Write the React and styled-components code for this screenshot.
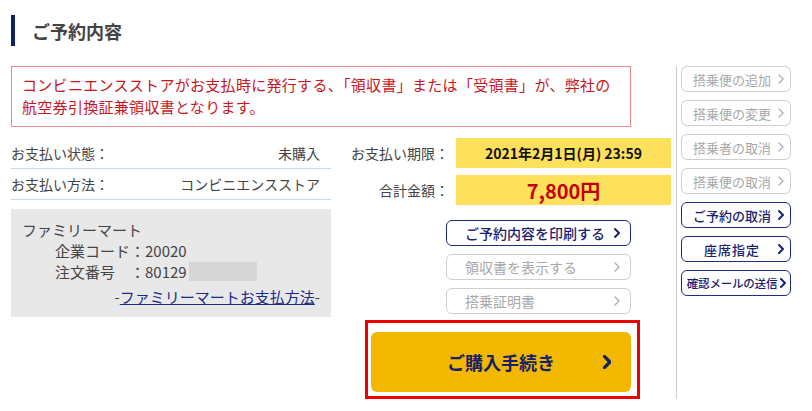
import styled, { createGlobalStyle } from 'styled-components';

const GlobalStyle = createGlobalStyle`
  html, body {
    margin: 0;
    padding: 0;
    background: #fff;
  }
  body {
    font-family: "Noto Sans CJK JP", "Noto Sans", sans-serif;
    color: #444;
  }
`;

const Page = styled.div`
  width: 812px;
  height: 411px;
  padding: 15px 0 0 11px;
  box-sizing: border-box;
  overflow: hidden;
`;

const Heading = styled.h2`
  margin: 0;
  height: 31px;
  display: flex;
  align-items: center;
  border-left: 4px solid #0d1f6e;
  padding-left: 17px;
  font-size: 18px;
  font-weight: 700;
  color: #444;
  line-height: 1;
`;

const Body = styled.div`
  display: flex;
  margin-top: 20px;
`;

const Main = styled.div`
  width: 660px;
`;

const Notice = styled.p`
  margin: 0;
  width: 620px;
  box-sizing: border-box;
  border: 1px solid #e88a8a;
  padding: 7px 10px 8px;
  font-size: 15px;
  line-height: 22px;
  letter-spacing: 0.3px;
  color: #c8161d;
`;

const Columns = styled.div`
  display: flex;
  margin-top: 11px;
`;

const LeftCol = styled.div`
  width: 320px;
`;

const InfoRow = styled.div`
  height: 30px;
  display: flex;
  align-items: center;
  justify-content: space-between;
  padding-right: 11px;
  border-bottom: 1px solid #c6d9ea;
  font-size: 14px;
  color: #444;
`;

const StoreBox = styled.div`
  margin-top: 9px;
  background: #e8e8e8;
  padding: 10px 11px;
  font-size: 15px;
  line-height: 21px;
  color: #444;
`;

const StoreLine = styled.div`
  padding-left: ${p => (p.$indent ? '33px' : '0')};
  display: flex;
  align-items: center;
`;

const Masked = styled.span`
  display: inline-block;
  width: 68px;
  height: 19px;
  margin-left: 2px;
  background: #d6d6d6;
`;

const LinkLine = styled.div`
  margin-top: 4px;
  text-align: right;
`;

const StoreLink = styled.a`
  color: #1a2a8a;
  text-decoration: underline;
`;

const MidCol = styled.div`
  margin-left: 9px;
  width: 331px;
  display: flex;
  flex-direction: column;
`;

const PayGrid = styled.div`
  display: grid;
  grid-template-columns: 109px 215px;
  column-gap: 7px;
  row-gap: 7px;
`;

const PayLabel = styled.div`
  height: 30px;
  display: flex;
  align-items: center;
  justify-content: flex-end;
  font-size: 14px;
  color: #444;
`;

const PayValue = styled.div`
  height: 30px;
  display: flex;
  align-items: center;
  justify-content: center;
  background: #fde05b;
  font-weight: 700;
  font-size: ${p => (p.$price ? '20px' : '14px')};
  color: ${p => (p.$price ? '#c40000' : '#111')};
`;

const ActionList = styled.div`
  margin-top: 15px;
  width: 291px;
  display: flex;
  flex-direction: column;
  align-items: flex-end;
  gap: 8px;
`;

const LinkButton = styled.button`
  width: ${p => p.$w || '185px'};
  height: 26px;
  box-sizing: border-box;
  display: flex;
  align-items: center;
  padding: ${p => p.$pad || '0 10px 0 18px'};
  background: #fff;
  border: 1px solid ${p => (p.$off ? '#cfcfcf' : '#1d2d7c')};
  border-radius: 6px;
  color: ${p => (p.$off ? '#a8a8a8' : '#1a2270')};
  font-family: inherit;
  font-size: ${p => p.$size || '14px'};
  font-weight: ${p => (p.$off ? 400 : 500)};
  letter-spacing: ${p => p.$ls || '0'};
  cursor: ${p => (p.$off ? 'default' : 'pointer')};
  white-space: nowrap;
`;

const Label = styled.span`
  flex: 1;
  text-align: ${p => p.$align || 'left'};
`;

const PurchaseWrap = styled.div`
  position: relative;
  margin: 18px 0 0 31px;
  width: 260px;
`;

const Highlight = styled.div`
  position: absolute;
  top: -12px;
  left: -6px;
  right: -9px;
  bottom: -7px;
  border: 3px solid #f00000;
  pointer-events: none;
`;

const PurchaseButton = styled.button`
  width: 260px;
  height: 60px;
  border: none;
  border-radius: 6px;
  background: #f2b800;
  color: #16206b;
  font-family: inherit;
  font-size: 18px;
  font-weight: 700;
  position: relative;
  display: flex;
  align-items: center;
  justify-content: center;
  cursor: pointer;
`;

const ChevronSlot = styled.span`
  position: absolute;
  right: 20px;
  top: 50%;
  transform: translateY(-50%);
  display: flex;
`;

const Sidebar = styled.div`
  margin-left: 5px;
  height: 333px;
  border-left: 1px solid #cccccc;
  padding-left: 4px;
  display: flex;
  flex-direction: column;
  gap: 8px;
`;

const Chevron = ({ color = '#1a2270', size = 10, width = 2 }) => (
  <svg width={size * 0.6} height={size} viewBox="0 0 6 10" fill="none" style={{ flexShrink: 0 }}>
    <polyline points="1,1 5,5 1,9" stroke={color} strokeWidth={width} strokeLinecap="round" strokeLinejoin="round" />
  </svg>
);

const sideItems = [
  { text: '搭乗便の追加', off: true },
  { text: '搭乗便の変更', off: true },
  { text: '搭乗者の取消', off: true },
  { text: '搭乗便の取消', off: true },
  { text: 'ご予約の取消' },
  { text: '座席指定', ls: '1px' },
  { text: '確認メールの送信', size: '11.5px', pad: '0 4px 0 2px', ls: '-0.2px' },
];

export default function App() {
  return (
    <Page>
      <GlobalStyle />
      <Heading>ご予約内容</Heading>
      <Body>
        <Main>
          <Notice>
            コンビニエンスストアがお支払時に発行する、「領収書」または「受領書」が、弊社の
            <br />
            航空券引換証兼領収書となります。
          </Notice>
          <Columns>
            <LeftCol>
              <InfoRow>
                <span>お支払い状態：</span>
                <span>未購入</span>
              </InfoRow>
              <InfoRow>
                <span>お支払い方法：</span>
                <span>コンビニエンスストア</span>
              </InfoRow>
              <StoreBox>
                <StoreLine>ファミリーマート</StoreLine>
                <StoreLine $indent>企業コード：20020</StoreLine>
                <StoreLine $indent>
                  注文番号　：80129
                  <Masked />
                </StoreLine>
                <LinkLine>
                  -<StoreLink href="#">ファミリーマートお支払方法</StoreLink>-
                </LinkLine>
              </StoreBox>
            </LeftCol>
            <MidCol>
              <PayGrid>
                <PayLabel>お支払い期限：</PayLabel>
                <PayValue>2021年2月1日(月) 23:59</PayValue>
                <PayLabel>合計金額：</PayLabel>
                <PayValue $price>7,800円</PayValue>
              </PayGrid>
              <ActionList>
                <LinkButton>
                  <Label>ご予約内容を印刷する</Label>
                  <Chevron />
                </LinkButton>
                <LinkButton $off>
                  <Label>領収書を表示する</Label>
                  <Chevron color="#b0b0b0" width={1.4} />
                </LinkButton>
                <LinkButton $off>
                  <Label>搭乗証明書</Label>
                  <Chevron color="#b0b0b0" width={1.4} />
                </LinkButton>
              </ActionList>
              <PurchaseWrap>
                <PurchaseButton>
                  ご購入手続き
                  <ChevronSlot>
                    <Chevron size={14} width={2.4} color="#16206b" />
                  </ChevronSlot>
                </PurchaseButton>
                <Highlight />
              </PurchaseWrap>
            </MidCol>
          </Columns>
        </Main>
        <Sidebar>
          {sideItems.map(item => (
            <LinkButton
              key={item.text}
              $off={item.off}
              $w="110px"
              $pad={item.pad || '0 6px 0 4px'}
              $size={item.size || '13px'}
              $ls={item.ls}
            >
              <Label $align="center">{item.text}</Label>
              <Chevron color={item.off ? '#b0b0b0' : '#1a2270'} width={item.off ? 1.4 : 2} />
            </LinkButton>
          ))}
        </Sidebar>
      </Body>
    </Page>
  );
}
